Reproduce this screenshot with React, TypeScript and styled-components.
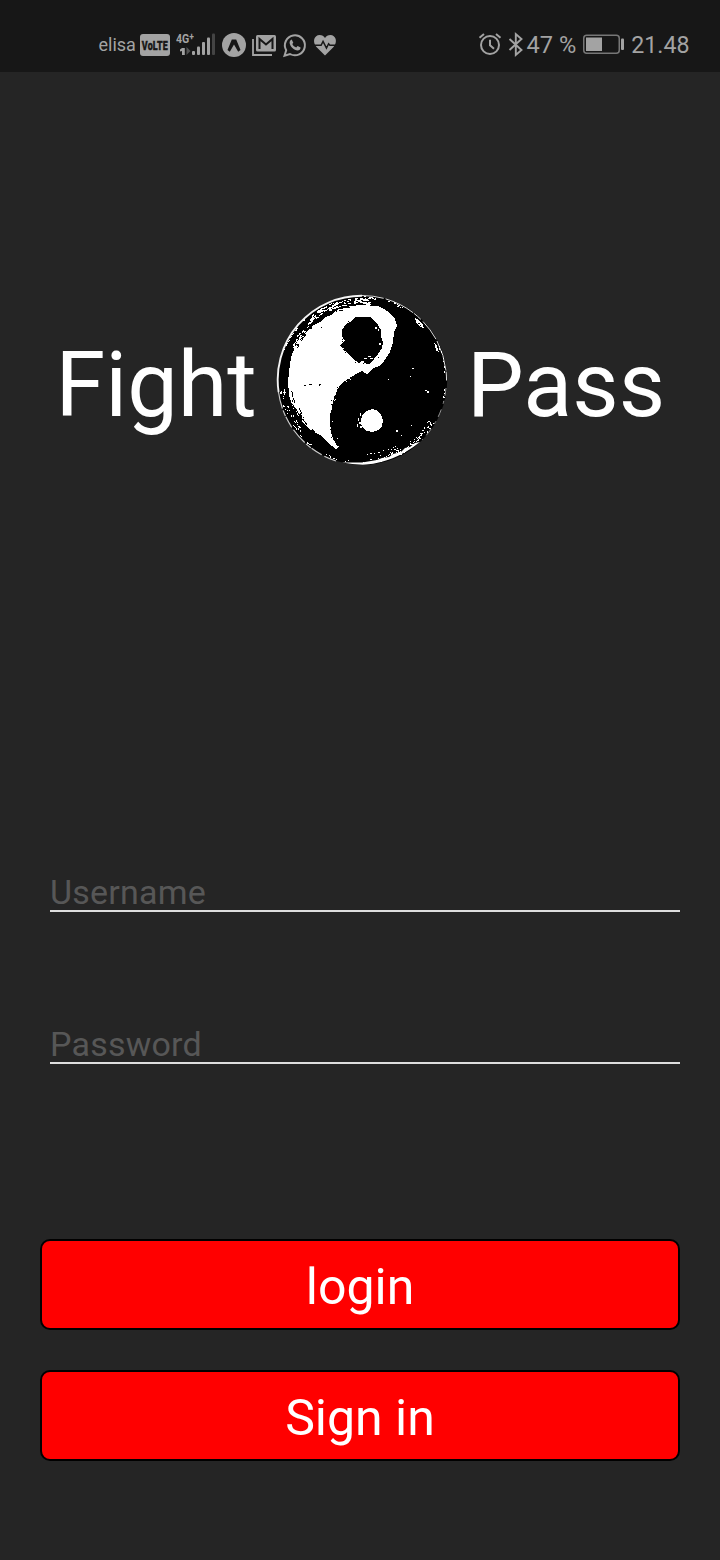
import React from 'react';
import styled, { createGlobalStyle } from 'styled-components';

const Global = createGlobalStyle`
  * { box-sizing: border-box; }
  body { margin: 0; background: #252525; font-family: Roboto, sans-serif; }
`;

const Screen = styled.main`
  width: 720px;
  height: 1560px;
  display: flex;
  flex-direction: column;
  background: #252525;
  color: #fff;
  overflow: hidden;
`;

const StatusBar = styled.header`
  height: 72px;
  flex: none;
  display: flex;
  justify-content: space-between;
  padding: 29px 30.5px 11px 98.5px;
  background: #171717;
  color: #a3a3a3;
`;

const StatusGroup = styled.div`
  display: flex;
  align-items: center;
  height: 32px;
`;

const StatusText = styled.span<{ $size: number; $gap?: number }>`
  font-size: ${(p) => p.$size}px;
  line-height: 32px;
  margin-left: ${(p) => p.$gap ?? 0}px;
  white-space: pre;
`;

const Glyph = styled.svg<{ $gap?: number }>`
  display: block;
  flex: none;
  overflow: visible;
  margin-left: ${(p) => p.$gap ?? 0}px;
`;

const VolteBadge = styled.span`
  width: 30px;
  height: 22px;
  margin-left: 4px;
  border-radius: 3px;
  background: #a3a3a3;
  color: #171717;
  display: flex;
  align-items: center;
  justify-content: center;
`;

const VolteLabel = styled.span`
  flex: none;
  font: 900 13.5px/22px Roboto, sans-serif;
  letter-spacing: 0.3px;
  -webkit-text-stroke: 0.4px #171717;
  transform: scaleX(0.66);
`;

const Signal = styled.div`
  width: 40px;
  height: 28px;
  margin-left: 6px;
  display: grid;
  grid-template: 28px / 40px;
`;

const SignalLabel = styled.span`
  grid-area: 1 / 1;
  font: 700 13.5px/15px Roboto, sans-serif;
  transform: scaleX(0.78);
  transform-origin: left;
`;

const SignalPlus = styled.sup`
  font-size: 11px;
  line-height: 0;
  vertical-align: 3px;
`;

const SignalBars = styled.svg`
  grid-area: 1 / 1;
`;

const Brand = styled.section`
  height: 172px;
  margin-top: 222px;
  flex: none;
  display: flex;
  align-items: center;
  padding-left: 55.5px;
`;

const BrandWord = styled.span<{ $width: number; $gap?: number }>`
  width: ${(p) => p.$width}px;
  margin-left: ${(p) => p.$gap ?? 0}px;
  font-size: 90px;
  line-height: 106px;
  padding-top: 12px;
  white-space: nowrap;
`;

const Form = styled.form`
  display: flex;
  flex-direction: column;
  margin: 400px 40px 0;
`;

const Field = styled.input`
  height: 46px;
  margin: 0 0 106px 10px;
  padding: 8px 0 0;
  border: 0;
  border-bottom: 2px solid #dedede;
  outline: 0;
  background: transparent;
  color: #fff;
  font: 34px/36px Roboto, sans-serif;
  letter-spacing: 0.22px;
  &::placeholder { color: #575757; opacity: 1; }
`;

const Actions = styled.div`
  display: flex;
  flex-direction: column;
  gap: 40px;
  margin-top: 69px;
`;

const Button = styled.button`
  height: 91px;
  padding: 4px 0 0;
  border: 2px solid #000;
  border-radius: 10px;
  background: #f00;
  color: #fff;
  font: 50px/58px Roboto, sans-serif;
`;

type Point = [number, number];

// Deterministic noise for the dry-brush texture.
const makeRandom = (seed: number) => () => {
  seed = (seed * 1664525 + 1013904223) >>> 0;
  return seed / 4294967296;
};

// Scatters short bristle marks along an arc; angles in degrees, clockwise from the right.
const bristles = (seed: number, from: number, to: number, rMin: number, rMax: number, count: number, length = 3) => {
  const rnd = makeRandom(seed);
  let d = '';
  for (let i = 0; i < count; i++) {
    const a = ((from + (to - from) * rnd()) * Math.PI) / 180;
    const r = rMin + (rMax - rMin) * rnd();
    const half = (0.5 + rnd() * length) / 2;
    const cx = 86 + Math.cos(a) * r;
    const cy = 86 + Math.sin(a) * r;
    const dx = -Math.sin(a) * half;
    const dy = Math.cos(a) * half;
    d += `M${(cx - dx).toFixed(1)} ${(cy - dy).toFixed(1)}L${(cx + dx).toFixed(1)} ${(cy + dy).toFixed(1)}`;
  }
  return d;
};

const lineFlecks = (seed: number, points: Point[], spread: number, perSegment: number) => {
  const rnd = makeRandom(seed);
  let d = '';
  for (let i = 0; i < points.length - 1; i++) {
    for (let k = 0; k < perSegment; k++) {
      const t = rnd();
      const x = points[i][0] + (points[i + 1][0] - points[i][0]) * t + (rnd() - 0.5) * spread;
      const y = points[i][1] + (points[i + 1][1] - points[i][1]) * t + (rnd() - 0.5) * spread;
      d += `M${Math.round(x)} ${Math.round(y)}h${1 + Math.round(rnd())}v1h-1z`;
    }
  }
  return d;
};

const innerEdge: Point[] = [[74, 84], [62, 94], [57, 107], [54, 121], [55, 137], [62, 154]];
const eyeEdge: Point[] = [[76, 25], [67, 34], [67, 46], [65, 52], [72, 60], [80, 67], [90, 68], [102, 61]];

const YinYang = () => (
  <svg width="172" height="172" viewBox="0 0 172 172" role="img" aria-label="Yin yang">
    <circle cx="86.200" cy="86" r="85" fill="#000" />
    <path d="M2.600 98A84 84 0 0 1 86 1.700" fill="none" stroke="#f4f4f4" strokeWidth="1.900" />
    <path d="M86 1.500A84.500 84.500 0 0 1 170.500 88" fill="none" stroke="#ddd" strokeWidth="1" strokeDasharray="22 2 31 1 9 3" />
    <path d="M2.500 98A84.500 84.500 0 0 0 60 167" fill="none" stroke="#ccc" strokeWidth="1.200" strokeDasharray="17 2 6 1 12 3" />
    <path d="M170 94A84.500 84.500 0 0 1 146 146" fill="none" stroke="#999" strokeWidth="1" strokeDasharray="8 5 3 6" />
    <path d="M66 168.500Q78 171 90 170.600Q119 168 144 148L139 149L134 153L129 154L125 158L117 160L113 163L106 164L101 166L86 168.500Z" fill="#fff" />
    <g shapeRendering="crispEdges">
      <path
        d="M13 101L12 87L14 70L16 60L19 54L24 44L31 37L38 31L44 28L50 23L55 21L60 16L69 14L74 12L86 11L102 12L108 15L113 18L119 25L121 32L118 38L117 48L114 58L108 67L103 72L96 75L91 80L86 77L80 80L74 84L67 88L62 94L60 100L57 107L56 114L54 121L54 131L55 137L57 145L62 153L60 155L52 149L44 141L35 136L29 131L24 124L19 119L16 111Z"
        fill="#fff"
      />
      <path d="M77 25L80 23L86 23L94 23L98 26L102 31L105 36L105 42L107 48L106 54L102 60L98 65L94 70L91 70L87 67L82 68L77 65L74 61L70 58L67 53L63 52L66 49L69 47L66 42L66 36L70 30L74 28Z" fill="#000" />
      <path d="M96 115L100 116L105 120L107 126L106 132L102 136L97 138L91 137L86 133L85 128L86 121L91 117Z" fill="#fff" />
      <path d={bristles(7, 230, 276, 76, 82, 85, 5)} stroke="#fff" />
      <path d={bristles(11, 205, 235, 74, 78, 42, 3)} stroke="#fff" />
      <path d={bristles(14, 200, 230, 82, 84, 18, 2)} stroke="#fff" />
      <path d={bristles(21, 205, 262, 72, 76, 60, 3)} stroke="#000" />
      <path d={bristles(33, 138, 175, 77, 83, 40, 2)} stroke="#fff" />
      <path d={bristles(37, 98, 138, 82, 84, 14, 2)} stroke="#fff" />
      <path d={bristles(41, 122, 172, 69, 74, 22, 7)} stroke="#000" />
      <path d={bristles(55, 30, 78, 78, 84, 60, 2)} stroke="#fff" />
      <path d={bristles(57, 45, 90, 81, 84, 32, 2)} stroke="#fff" />
      <path d={bristles(58, 62, 88, 74, 81, 20, 1.5)} stroke="#fff" />
      <path d={bristles(59, 272, 300, 81, 84, 15, 3)} stroke="#fff" />
      <path d={bristles(63, 330, 372, 83, 84.5, 12, 2)} stroke="#fff" />
      <path d={lineFlecks(67, innerEdge, 4, 7)} fill="#000" />
      <path d={lineFlecks(72, innerEdge, 6, 4)} fill="#fff" />
      <path d={lineFlecks(81, eyeEdge, 4, 4)} fill="#000" />
      <path d="M139 24l4 2 4 5 1 3-4-1-4-5zM158 48l3 4 2 6-3-1v-2l-1-3z" fill="#fff" />
      <path d="M28 91h2v1h-2zM33 90h3v1h-3zM43 90h2v1h-2zM43 91h1v1h-1zM45 33h1v1h-1zM142 29h2v1h-2zM144 31h1v1h-1z" fill="#000" />
      <path d="M84 119h1v3h-1zM82 124h1v3h-1zM83 128h2v2h-2zM81 130h1v3h-1zM84 132h2v2h-2zM88 64h3v1h-3zM92 62h3v1h-3zM94 64h3v1h-3zM99 33h2v2h-2zM102 35h1v2h-1zM103 49h2v2h-2zM149 96h2v1h-2zM151 97h2v2h-2zM120 136h2v2h-2zM125 141h1v1h-1zM135 131h1v1h-1zM112 85h1v1h-1zM136 74h2v1h-2zM134 82h1v1h-1z" fill="#fff" />
    </g>
  </svg>
);

const App = () => (
  <>
    <Global />
    <Screen>
      <StatusBar>
        <StatusGroup>
          <StatusText $size={18}>elisa</StatusText>
          <VolteBadge><VolteLabel>VoLTE</VolteLabel></VolteBadge>
          <Signal>
            <SignalLabel>4G<SignalPlus>+</SignalPlus></SignalLabel>
            <SignalBars width="40" height="28" fill="#a3a3a3">
              <path d="M6 17h2.800V24H6v-4l-2 .5V18.500z" />
              <path d="M10.500 16v8l4-4z" fill="#555" />
              <rect x="16" y="20" width="3" height="4" rx="1" />
              <rect x="21" y="15.500" width="3" height="8.500" rx="1" />
              <rect x="26" y="11" width="3" height="13" rx="1" />
              <rect x="31" y="6.500" width="3" height="17.500" rx="1" />
              <rect x="36" y="2.500" width="3" height="21.500" rx="1" fill="#444" />
            </SignalBars>
          </Signal>
          <Glyph $gap={6.5} width="24" height="24">
            <circle cx="12" cy="12" r="12" fill="#a3a3a3" />
            <path d="M9.800 6.500h4.400L18.500 17l-2.300 1.800L12 11.500l-4.200 7.300L5.500 17z" fill="#171717" />
          </Glyph>
          <Glyph $gap={6} width="24" height="21" fill="none">
            <path d="M1 4v16h19" stroke="#a3a3a3" strokeWidth="1.800" />
            <rect x="4" width="20" height="16.500" rx="1.500" fill="#a3a3a3" />
            <path d="M7.500 14V4L14 9.500 20.500 4V14" stroke="#171717" strokeWidth="2" />
          </Glyph>
          <Glyph $gap={6.5} width="24" height="24" viewBox="0 0 24 24" fill="#a3a3a3">
            <path d="M1.500 22.800l1.700-5.600A10 10 0 1 1 7 21z" fill="none" stroke="#a3a3a3" strokeWidth="2" />
            <path d="M8.700 6.500l1.600 3.200-1 1.400c1 1.800 2 2.700 3.900 3.500l1.400-1.500 3 1.500c0 1.800-1.300 2.900-3 2.900-3.600-.3-7.400-4-8-7.600 0-1.700.8-3.100 2.100-3.400z" />
          </Glyph>
          <Glyph $gap={6} width="24" height="22" viewBox="0 1 24 22.500">
            <path d="M12 23L3.500 14.500C-1.500 9 1 2 6.500 2c2.500 0 4.300 1.200 5.500 3 1.200-1.800 3-3 5.500-3C23 2 25.500 9 20.500 14.500z" fill="#a3a3a3" />
            <path d="M1 12.500h7l2-4 3.500 7 2.200-4.500 1.300 1.500h6" fill="none" stroke="#171717" strokeWidth="1.500" />
          </Glyph>
        </StatusGroup>
        <StatusGroup>
          <Glyph width="24" height="24" viewBox="0 0 24 24" fill="none" stroke="#a3a3a3" strokeWidth="2">
            <circle cx="12" cy="12" r="9" />
            <path d="M12 6.700V12.200l4 3.500M1.500 4.700L6 .9M22.500 4.700L18 .9" />
          </Glyph>
          <Glyph $gap={6} width="16" height="24" fill="none" stroke="#a3a3a3" strokeWidth="1.900">
            <path d="M1.500 6L13.500 17 7.800 22V1L13.500 6 1.500 17" />
          </Glyph>
          <StatusText $size={23.6} $gap={3}>47 %</StatusText>
          <Glyph $gap={7} width="41" height="20">
            <rect x=".75" y=".25" width="35.500" height="18" rx="3" fill="none" stroke="#777" strokeWidth="1.500" />
            <path d="M3 2.500h16V16H3z" fill="#a3a3a3" />
            <rect x="38" y="3.500" width="3" height="11.500" rx="1" fill="#a3a3a3" />
          </Glyph>
          <StatusText $size={23.2} $gap={7}>21.48</StatusText>
        </StatusGroup>
      </StatusBar>
      <Brand>
        <BrandWord $width={220.5}>Fight</BrandWord>
        <YinYang />
        <BrandWord $width={220} $gap={19}>Pass</BrandWord>
      </Brand>
      <Form>
        <Field placeholder="Username" aria-label="Username" />
        <Field placeholder="Password" aria-label="Password" type="password" />
        <Actions>
          <Button type="button">login</Button>
          <Button type="button">Sign in</Button>
        </Actions>
      </Form>
    </Screen>
  </>
);

export default App;
